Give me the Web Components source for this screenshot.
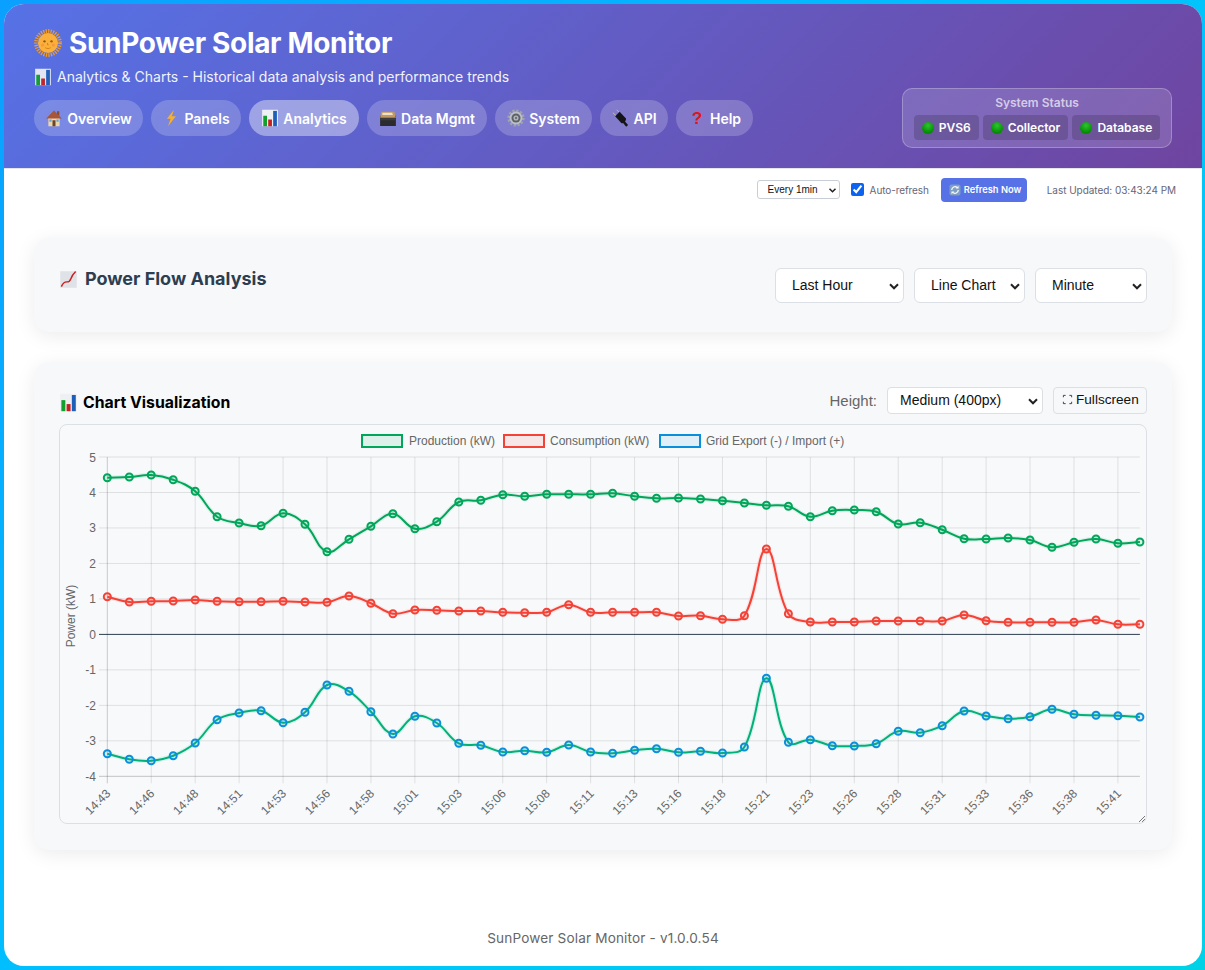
<!DOCTYPE html>
<html lang="en">
<head>
<meta charset="utf-8">
<title>SunPower Solar Monitor</title>
<style>
  html, body { margin: 0; height: 100%; }
  body {
    box-sizing: border-box;
    height: 970px;
    overflow: hidden;
    padding: 4px 3px 4px 4px;
    background: linear-gradient(135deg, #0aa0ff, #00c2ff 50%, #00d2e6);
    font-family: Inter, "Liberation Sans", sans-serif;
  }
</style>
</head>
<body>
<solar-app>
  <solar-header slot="header" heading="SunPower Solar Monitor" tagline="Analytics &amp; Charts - Historical data analysis and performance trends">
    <nav-pill icon="house" style="width:109px">Overview</nav-pill>
    <nav-pill icon="zap" style="width:90px">Panels</nav-pill>
    <nav-pill icon="bars" style="width:110px" active>Analytics</nav-pill>
    <nav-pill icon="box" style="width:120px">Data Mgmt</nav-pill>
    <nav-pill icon="gear" style="width:97px">System</nav-pill>
    <nav-pill icon="plug" style="width:68px">API</nav-pill>
    <nav-pill icon="help" style="width:77px">Help</nav-pill>
    <status-chip slot="status">PVS6</status-chip>
    <status-chip slot="status">Collector</status-chip>
    <status-chip slot="status">Database</status-chip>
  </solar-header>
  <refresh-bar slot="toolbar"></refresh-bar>

  <panel-card>
    <analysis-controls></analysis-controls>
  </panel-card>
  <panel-card variant="chart">
    <chart-head></chart-head>
    <power-chart></power-chart>
  </panel-card>

  <span slot="footer">SunPower Solar Monitor - v1.0.0.54</span>
</solar-app>

<script>
(() => {
  const ICONS = {
    sun: `<circle cx="12" cy="12" r="10.3" fill="none" stroke="#f49a1c" stroke-width="3.2" stroke-dasharray="1.1 1"/>
      <circle cx="12" cy="12" r="8.6" fill="#fbb03b"/>
      <circle cx="9" cy="10.6" r="1" fill="#8a5a12"/><circle cx="15" cy="10.6" r="1" fill="#8a5a12"/>
      <path d="M11.6 12v1.6h1M9.6 16c1.5 1 3.3 1 4.8 0" fill="none" stroke="#c97a16" stroke-width=".7"/>
      <circle cx="7.4" cy="13.8" r="1.4" fill="#f58a3c" opacity=".6"/><circle cx="16.6" cy="13.8" r="1.4" fill="#f58a3c" opacity=".6"/>`,
    bars: `<rect x="1.5" y="1" width="21" height="22" fill="#eef0f4"/>
      <rect x="3" y="9" width="5" height="14" fill="#12a02c"/>
      <rect x="9.6" y="14" width="5" height="9" fill="#c8201f"/>
      <rect x="16.2" y="2.5" width="5" height="20.5" fill="#1d5fb8"/>`,
    house: `<rect x="16" y="3" width="3" height="6" fill="#8a4b2a"/>
      <rect x="4.5" y="11" width="15" height="12" fill="#ecd6ac"/>
      <path d="M12 2 1.5 12.5h21z" fill="#a8553a"/>
      <rect x="10" y="15" width="4" height="8" fill="#6f4427"/>
      <rect x="5.8" y="14" width="3" height="3" fill="#5fa7d8"/><rect x="15.2" y="14" width="3" height="3" fill="#5fa7d8"/>`,
    zap: `<path d="M16 1 6.500 13h5L8 23 18.500 9.500h-5.500z" fill="#f7b02c"/>`,
    box: `<path d="M1.500 9h21v13.500h-21z" fill="#2b2b2d"/>
      <path d="M3 3.500h17.500l2 8H1.500z" fill="#c29a5f"/>
      <path d="M4.500 5h13l1 3h-14z" fill="#ece2cc"/>
      <path d="M1.500 12h21v3h-21z" fill="#3d3d40"/>`,
    gear: `<circle cx="12" cy="12" r="9.800" fill="none" stroke="#9fa4aa" stroke-width="3.400" stroke-dasharray="3 2.130"/>
      <circle cx="12" cy="12" r="8.600" fill="#bcc0c5"/>
      <circle cx="12" cy="12" r="6" fill="#5d6167"/>
      <circle cx="12" cy="12" r="3.400" fill="#b4b8bd"/>
      <circle cx="12" cy="12" r="1.600" fill="#6d7177"/>`,
    plug: `<path d="M2.500 5 8.500 10.500M7.500 1 13 6.500" stroke="#cdb98a" stroke-width="1.300" fill="none"/>
      <path d="M5.500 9.500 11.500 3.500 20 12.500c.5 2.500-2 6-6 6.500z" fill="#151517"/>
      <path d="M16 16l5.500 6.500" stroke="#151517" stroke-width="3.200" fill="none"/>`,
    chart: `<rect x="1.500" y="1.500" width="21" height="21" fill="#dfe3e8"/>
      <path d="M3 21c2-5 4-6 7-6s4-1 5-4 3-6 6-9" fill="none" stroke="#c8201f" stroke-width="1.800"/>`,
    cycle: `<rect x="1" y="1" width="22" height="22" rx="4" fill="#7f9fc4"/>
      <path d="M5.500 12a6.500 6.500 0 0 1 11-4.700M18.500 12a6.500 6.500 0 0 1-11 4.700" fill="none" stroke="#fff" stroke-width="2.400"/>
      <path d="M19 3.500v5.500h-5.500zM5 20.500V15h5.500z" fill="#fff"/>`,
    full: `<path d="M1 6V1h6M17 1h6v5M23 18v5h-6M7 23H1v-5" fill="none" stroke="#333" stroke-width="2.400"/>`,
    chevron: `<path d="M4 8.500 12 16.500 20 8.500" fill="none" stroke="#222" stroke-width="4"/>`
  };

  class EmojiIcon extends HTMLElement {
    constructor() {
      super();
      this.attachShadow({ mode: 'open' });
    }

    connectedCallback() {
      const name = this.getAttribute('name');
      const size = this.getAttribute('size') || 16;
      const inner = name === 'help'
        ? `<text x="12" y="20" text-anchor="middle" font-family="Liberation Sans, sans-serif" font-weight="700" font-size="23" fill="#e0141a">?</text>`
        : ICONS[name];
      this.shadowRoot.innerHTML = `
        <style>
          :host { display: inline-flex; flex: none; width: ${size}px; height: ${size}px; }
          svg { width: 100%; height: 100%; display: block; overflow: visible; }
        </style>
        <svg viewBox="0 0 24 24" aria-hidden="true">${inner}</svg>`;
    }
  }
  customElements.define('emoji-icon', EmojiIcon);

  const appTemplate = document.createElement('template');
  appTemplate.innerHTML = `
    <style>
      :host {
        display: flex;
        flex-direction: column;
        height: 962px;
        background: #fff;
        border-radius: 20px;
        overflow: hidden;
      }
      main {
        display: flex;
        flex-direction: column;
        gap: 30px;
        padding: 28px 30px 0;
      }
      footer {
        padding-top: 80px;
        line-height: 16px;
        text-align: center;
        font-size: 13.6px;
        letter-spacing: .15px;
        color: #666;
      }
    </style>
    <slot name="header"></slot>
    <slot name="toolbar"></slot>
    <main><slot></slot></main>
    <footer><slot name="footer"></slot></footer>
  `;

  class SolarApp extends HTMLElement {
    constructor() {
      super();
      this.attachShadow({ mode: 'open' });
      this.shadowRoot.appendChild(appTemplate.content.cloneNode(true));
    }
  }
  customElements.define('solar-app', SolarApp);

  const headerTemplate = document.createElement('template');
  headerTemplate.innerHTML = `
    <style>
      :host {
        display: flex;
        justify-content: space-between;
        align-items: flex-end;
        box-sizing: border-box;
        height: 165px;
        padding: 0 30px 20px;
        background: linear-gradient(135deg, #5672e6, #6f45a0);
        border-bottom: 1px solid #e6e6ea;
        color: #fff;
      }
      h1 {
        display: flex;
        align-items: center;
        gap: 7px;
        margin: 0;
        font-size: 28px;
        line-height: 34px;
        font-weight: 700;
        letter-spacing: -.33px;
      }
      p {
        display: flex;
        align-items: center;
        gap: 5px;
        margin: 7px 0 13px;
        font-size: 14px;
        line-height: 20px;
        opacity: .92;
      }
      nav { display: flex; gap: 8px; margin-bottom: 12px; }
      .status {
        box-sizing: border-box;
        width: 270px;
        height: 60px;
        padding: 7px 11px;
        background: rgba(255, 255, 255, .15);
        border: 1px solid rgba(255, 255, 255, .25);
        border-radius: 10px;
      }
      .status-title {
        text-align: center;
        font-size: 12px;
        line-height: 14px;
        font-weight: 600;
        color: rgba(255, 255, 255, .68);
      }
      .chips { display: flex; justify-content: center; gap: 4px; margin-top: 5px; }
    </style>
    <div>
      <h1><emoji-icon name="sun" size="28"></emoji-icon><span class="heading"></span></h1>
      <p><emoji-icon name="bars" size="18"></emoji-icon><span class="tagline"></span></p>
      <nav><slot></slot></nav>
    </div>
    <div class="status">
      <div class="status-title">System Status</div>
      <div class="chips"><slot name="status"></slot></div>
    </div>
  `;

  class SolarHeader extends HTMLElement {
    constructor() {
      super();
      this.attachShadow({ mode: 'open' });
      this.shadowRoot.appendChild(headerTemplate.content.cloneNode(true));
    }

    connectedCallback() {
      this.shadowRoot.querySelector('.heading').textContent = this.getAttribute('heading');
      this.shadowRoot.querySelector('.tagline').textContent = this.getAttribute('tagline');
    }
  }
  customElements.define('solar-header', SolarHeader);

  class NavPill extends HTMLElement {
    constructor() {
      super();
      this.attachShadow({ mode: 'open' });
    }

    connectedCallback() {
      this.shadowRoot.innerHTML = `
        <style>
          :host {
            display: inline-flex;
            align-items: center;
            justify-content: center;
            gap: 4px;
            box-sizing: border-box;
            height: 36px;
            background: rgba(255, 255, 255, .2);
            border-radius: 18px;
            font-size: 14px;
            font-weight: 600;
            color: #fff;
            white-space: nowrap;
          }
          :host([active]) { background: rgba(255, 255, 255, .4); }
        </style>
        <emoji-icon name="${this.getAttribute('icon')}" size="18"></emoji-icon><slot></slot>`;
    }
  }
  customElements.define('nav-pill', NavPill);

  const chipTemplate = document.createElement('template');
  chipTemplate.innerHTML = `
    <style>
      :host {
        display: inline-flex;
        align-items: center;
        gap: 5px;
        height: 25px;
        padding: 0 8px;
        background: rgba(0, 0, 0, .16);
        border-radius: 4px;
        font-size: 12px;
        font-weight: 600;
        color: #fff;
      }
      i {
        width: 12px;
        height: 12px;
        border-radius: 50%;
        background: radial-gradient(circle at 50% 30%, #2fc42f, #0a9a0a 55%, #056b05);
      }
    </style>
    <i></i><slot></slot>
  `;

  class StatusChip extends HTMLElement {
    constructor() {
      super();
      this.attachShadow({ mode: 'open' });
      this.shadowRoot.appendChild(chipTemplate.content.cloneNode(true));
    }
  }
  customElements.define('status-chip', StatusChip);

  // native select, with the arrow drawn so it looks the same everywhere
  class FormSelect extends HTMLElement {
    constructor() {
      super();
      this.attachShadow({ mode: 'open' });
    }

    connectedCallback() {
      const options = this.getAttribute('options').split('|');
      const height = this.getAttribute('height') || 35;
      const pad = this.getAttribute('pad') || 16;
      const font = this.getAttribute('font') || 14;
      const arrow = this.getAttribute('arrow') || 12;
      this.shadowRoot.innerHTML = `
        <style>
          :host { display: inline-block; position: relative; width: ${this.getAttribute('width')}px; height: ${height}px; }
          select {
            appearance: none;
            box-sizing: border-box;
            width: 100%;
            height: 100%;
            margin: 0;
            padding: 0 0 ${this.getAttribute('lift') || 1}px ${pad}px;
            background: #fff;
            border: 1px solid ${this.getAttribute('line') || '#dcdfe3'};
            border-radius: ${this.getAttribute('radius') || 6}px;
            font: ${font}px "Liberation Sans", sans-serif;
            color: #111;
          }
          emoji-icon { position: absolute; right: ${this.getAttribute('inset') || 4}px; top: 50%; transform: translateY(-50%); pointer-events: none; }
        </style>
        <select>${options.map(o => `<option>${o}</option>`).join('')}</select>
        <emoji-icon name="chevron" size="${arrow}"></emoji-icon>`;
    }
  }
  customElements.define('form-select', FormSelect);

  const refreshTemplate = document.createElement('template');
  refreshTemplate.innerHTML = `
    <style>
      :host {
        display: flex;
        justify-content: flex-end;
        align-items: center;
        height: 41px;
        padding: 0 26px 0 0;
        box-sizing: border-box;
        font-size: 10px;
        letter-spacing: -.04px;
        color: #667;
      }
      label { display: flex; align-items: center; gap: 6px; margin: 0 12px 0 11px; letter-spacing: -.1px; }
      input { width: 13px; height: 13px; margin: 0; accent-color: #0b63f0; }
      button {
        display: flex;
        align-items: center;
        gap: 3px;
        box-sizing: border-box;
        width: 86px;
        height: 24px;
        padding: 0 0 0 8px;
        margin-right: 20px;
        background: #5672e6;
        border: 0;
        border-radius: 4px;
        font: 600 9.3px Inter, sans-serif;
        color: #fff;
      }
    </style>
    <form-select width="83" height="19" pad="10" font="10" arrow="9" inset="3" radius="3" lift="0" line="#c9ced6" options="Every 1min"></form-select>
    <label><input type="checkbox" checked>Auto-refresh</label>
    <button><emoji-icon name="cycle" size="12"></emoji-icon>Refresh Now</button>
    <span>Last Updated: 03:43:24 PM</span>
  `;

  class RefreshBar extends HTMLElement {
    constructor() {
      super();
      this.attachShadow({ mode: 'open' });
      this.shadowRoot.appendChild(refreshTemplate.content.cloneNode(true));
    }
  }
  customElements.define('refresh-bar', RefreshBar);

  const cardTemplate = document.createElement('template');
  cardTemplate.innerHTML = `
    <style>
      :host {
        display: block;
        box-sizing: border-box;
        padding: 30px 25px 29px;
        background: #f7f8fa;
        border-radius: 15px;
        box-shadow: 0 4px 20px rgba(0, 0, 0, .08);
      }
      :host([variant="chart"]) { padding: 25px 25px 26px; }
    </style>
    <slot></slot>
  `;

  class PanelCard extends HTMLElement {
    constructor() {
      super();
      this.attachShadow({ mode: 'open' });
      this.shadowRoot.appendChild(cardTemplate.content.cloneNode(true));
    }
  }
  customElements.define('panel-card', PanelCard);

  const controlsTemplate = document.createElement('template');
  controlsTemplate.innerHTML = `
    <style>
      :host { display: flex; justify-content: space-between; align-items: flex-start; }
      h2 {
        display: flex;
        align-items: center;
        gap: 7px;
        margin: 0;
        font-size: 18px;
        line-height: 22px;
        font-weight: 700;
        color: #2c3e50;
      }
      .picks { display: flex; gap: 10px; }
    </style>
    <h2><emoji-icon name="chart" size="19"></emoji-icon>Power Flow Analysis</h2>
    <div class="picks">
      <form-select width="129" options="Last Hour"></form-select>
      <form-select width="111" options="Line Chart"></form-select>
      <form-select width="112" options="Minute"></form-select>
    </div>
  `;

  class AnalysisControls extends HTMLElement {
    constructor() {
      super();
      this.attachShadow({ mode: 'open' });
      this.shadowRoot.appendChild(controlsTemplate.content.cloneNode(true));
    }
  }
  customElements.define('analysis-controls', AnalysisControls);

  const headTemplate = document.createElement('template');
  headTemplate.innerHTML = `
    <style>
      :host { display: flex; align-items: center; height: 27px; margin-bottom: 10px; }
      h3 {
        display: flex;
        align-items: center;
        gap: 5px;
        margin: 4px auto 0 0;
        font-size: 15.8px;
        font-weight: 700;
        color: #000;
      }
      span { margin-right: 10px; font: 15px "Liberation Sans", sans-serif; color: #666; }
      button {
        display: flex;
        align-items: center;
        gap: 4px;
        box-sizing: border-box;
        width: 94px;
        height: 27px;
        margin-left: 10px;
        padding: 0 0 3px 9px;
        background: #f7f8fa;
        border: 1px solid #dcdfe3;
        border-radius: 4px;
        font: 13.6px "Liberation Sans", sans-serif;
        color: #111;
      }
    </style>
    <h3><emoji-icon name="bars" size="19"></emoji-icon>Chart Visualization</h3>
    <span>Height:</span>
    <form-select width="156" height="27" pad="12" radius="4" options="Medium (400px)"></form-select>
    <button><emoji-icon name="full" size="9"></emoji-icon>Fullscreen</button>
  `;

  class ChartHead extends HTMLElement {
    constructor() {
      super();
      this.attachShadow({ mode: 'open' });
      this.shadowRoot.appendChild(headTemplate.content.cloneNode(true));
    }
  }
  customElements.define('chart-head', ChartHead);

  // y values traced off the plot, px*3 from the top of the two plot halves
  const TOP_HALF = 450, BOTTOM_HALF = 640;
  const SERIES = [
    {
      label: 'Production (kW)', color: '#00a65a', point: '#00a65a', base: TOP_HALF, tint: 'rgba(0,166,90,.1)',
      data: [83,81,75,89,124,200,219,227,190,223,305,268,229,191,236,215,156,151,134,139,133,133,133,130,139,145,144,147,152,159,166,169,200,182,180,185,222,218,239,266,267,264,270,292,277,267,280,276]
    },
    {
      label: 'Consumption (kW)', color: '#f44336', point: '#f44336', base: TOP_HALF, tint: 'rgba(244,67,54,.1)',
      data: [440,456,454,453,450,454,455,455,454,456,457,438,460,491,480,481,483,483,487,488,487,464,487,487,487,487,498,497,508,497,297,491,516,516,516,513,513,513,513,495,512,517,517,517,517,510,523,523]
    },
    {
      label: 'Grid Export (-) / Import (+)', color: '#00b27a', point: '#0a8fdc', base: BOTTOM_HALF, tint: 'rgba(10,143,220,.1)',
      data: [341,358,362,347,309,239,219,212,248,217,135,154,215,282,229,249,310,316,336,332,337,315,336,340,331,326,337,334,339,321,115,307,299,317,318,311,274,278,257,213,228,236,230,208,223,226,227,231]
    }
  ];
  const LABELS = ['14:43','14:46','14:48','14:51','14:53','14:56','14:58','15:01','15:03','15:06','15:08','15:11','15:13','15:16','15:18','15:21','15:23','15:26','15:28','15:31','15:33','15:36','15:38','15:41'];
  const LEFT = 107.3, STEP = 21.97, TOP = 457, UNIT = 35.48;

  // same control points as chart.js with tension 0.4
  const curve = pts => {
    const t = 0.4;
    const ctrl = pts.map((p, i) => {
      const a = pts[i - 1] || p, b = pts[i + 1] || p;
      const d1 = Math.hypot(p[0] - a[0], p[1] - a[1]), d2 = Math.hypot(b[0] - p[0], b[1] - p[1]);
      const sum = d1 + d2 || 1;
      return {
        prev: [p[0] - t * d1 / sum * (b[0] - a[0]), p[1] - t * d1 / sum * (b[1] - a[1])],
        next: [p[0] + t * d2 / sum * (b[0] - a[0]), p[1] + t * d2 / sum * (b[1] - a[1])]
      };
    });
    let d = `M${pts[0][0].toFixed(1)} ${pts[0][1].toFixed(1)}`;
    for (let i = 1; i < pts.length; i++) {
      const c1 = ctrl[i - 1].next, c2 = ctrl[i].prev, p = pts[i];
      d += `C${c1[0].toFixed(1)} ${c1[1].toFixed(1)} ${c2[0].toFixed(1)} ${c2[1].toFixed(1)} ${p[0].toFixed(1)} ${p[1].toFixed(1)}`;
    }
    return d;
  };

  class PowerChart extends HTMLElement {
    constructor() {
      super();
      this.attachShadow({ mode: 'open' });
    }

    connectedCallback() {
      const bottom = TOP + 9 * UNIT;
      const right = LEFT + 47 * STEP;
      let grid = '';
      let ticks = '';

      for (let v = 5; v >= -4; v--) {
        const y = TOP + (5 - v) * UNIT;
        const stroke = v === 0 ? '#2c3e50' : v === -4 ? 'rgba(0,0,0,.22)' : 'rgba(0,0,0,.1)';
        grid += `<line x1="99" x2="${right}" y1="${y}" y2="${y}" stroke="${stroke}"/>`;
        ticks += `<text x="96" y="${y + 4.5}" text-anchor="end">${v}</text>`;
      }
      LABELS.forEach((label, i) => {
        const x = LEFT + i * 2 * STEP;
        grid += `<line x1="${x}" x2="${x}" y1="${TOP}" y2="${bottom + 7}" stroke="rgba(0,0,0,${i ? .1 : .2})"/>`;
        ticks += `<text x="${x + 4}" y="${bottom + 18}" text-anchor="end" transform="rotate(-45 ${x + 4} ${bottom + 18})">${label}</text>`;
      });

      const lines = SERIES.map(s => {
        const pts = s.data.map((v, i) => [LEFT + i * STEP, s.base + v / 3]);
        const d = curve(pts);
        const dots = pts.map(p => `<circle cx="${p[0].toFixed(1)}" cy="${p[1].toFixed(1)}" r="3.5" fill="${s.tint}" stroke="${s.point}" stroke-width="2"/>`).join('');
        return `<path d="${d}" fill="none" stroke="${s.color}" stroke-opacity=".1" stroke-width="4.5"/>
          <path d="${d}" fill="none" stroke="${s.color}" stroke-width="2"/>${dots}`;
      }).join('');

      const legendAt = [[361, 409], [503, 550], [659, 706]];
      const legend = SERIES.map((s, i) => `
        <rect x="${legendAt[i][0] + 1}" y="435" width="40" height="12" fill="${s.tint}" stroke="${s.point}" stroke-width="2"/>
        <text x="${legendAt[i][1]}" y="445">${s.label}</text>`).join('');

      this.shadowRoot.innerHTML = `
        <style>
          :host {
            display: block;
            box-sizing: border-box;
            height: 400px;
            background: #f8f9fb;
            border: 1px solid #dcdfe3;
            border-radius: 8px;
            overflow: hidden;
          }
          svg { display: block; width: 1086px; height: 398px; }
          text { font: 12px "Liberation Sans", sans-serif; fill: #666; }
        </style>
        <svg viewBox="60 425 1086 398">
          ${legend}
          ${grid}
          ${ticks}
          <text x="75" y="616" text-anchor="middle" transform="rotate(-90 75 616)">Power (kW)</text>
          ${lines}
          <path d="M1139 822l6-6M1142 822l3-3" stroke="#777" stroke-width="1" fill="none"/>
        </svg>`;
    }
  }
  customElements.define('power-chart', PowerChart);
})();
</script>
</body>
</html>
